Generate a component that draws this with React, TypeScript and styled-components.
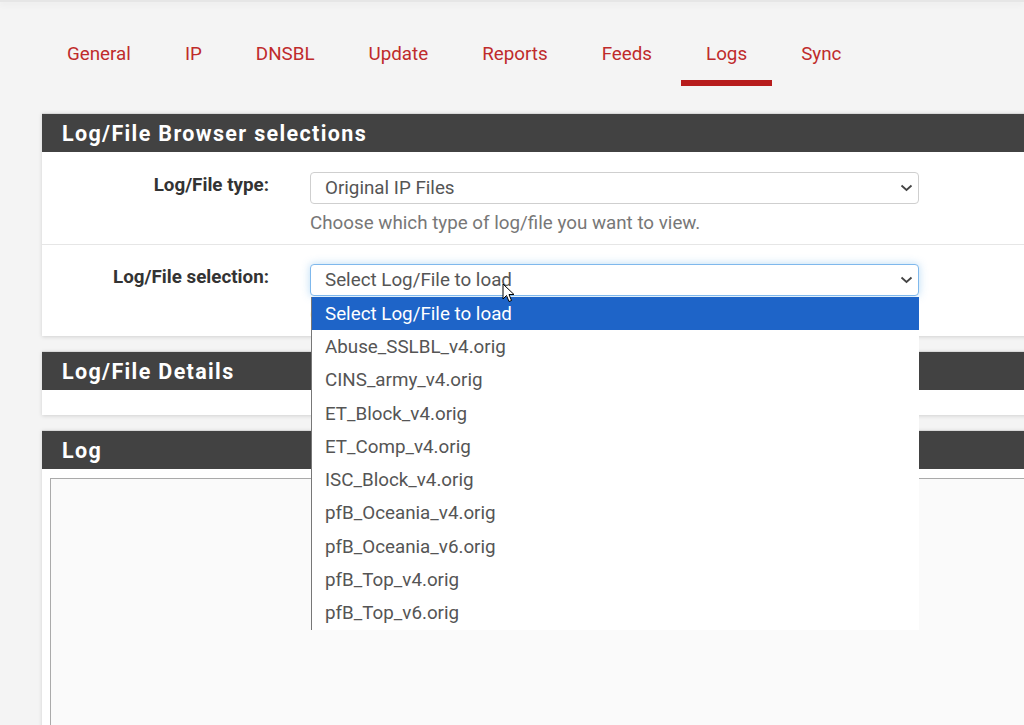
import React from 'react';
import styled, { createGlobalStyle } from 'styled-components';

const GlobalStyle = createGlobalStyle`
  html, body {
    margin: 0;
    padding: 0;
    background: #f4f4f4;
    overflow: hidden;
    font-family: Roboto, "Liberation Sans", sans-serif;
  }
`;

const TABS = ['General', 'IP', 'DNSBL', 'Update', 'Reports', 'Feeds', 'Logs', 'Sync'];

const FILES = [
  'Select Log/File to load',
  'Abuse_SSLBL_v4.orig',
  'CINS_army_v4.orig',
  'ET_Block_v4.orig',
  'ET_Comp_v4.orig',
  'ISC_Block_v4.orig',
  'pfB_Oceania_v4.orig',
  'pfB_Oceania_v6.orig',
  'pfB_Top_v4.orig',
  'pfB_Top_v6.orig',
];

const Page = styled.div`
  width: 1024px;
  height: 725px;
  overflow: hidden;
  position: relative;
`;

const TopEdge = styled.div`
  height: 2px;
  background: #e6e6e6;
  box-shadow: 0 2px 6px rgba(0, 0, 0, 0.08);
`;

const Tabs = styled.ul`
  display: flex;
  gap: 4px;
  list-style: none;
  margin: 26px 0 0 42px;
  padding: 0;
`;

const Tab = styled.li<{ $active?: boolean }>`
  padding: 0 25px;
  height: 52px;
  display: flex;
  align-items: center;
  font-size: 18.8px;
  color: #bf2b2b;
  border-bottom: 6px solid ${(p) => (p.$active ? '#b71c1c' : 'transparent')};
`;

const Content = styled.div`
  margin: 27px 0 0 42px;
  width: 1100px;
  display: flex;
  flex-direction: column;
  gap: 15px;
`;

const Panel = styled.section`
  background: #fff;
  box-shadow: 0 1px 4px rgba(0, 0, 0, 0.14);
`;

const PanelHeading = styled.h2`
  margin: 0;
  height: 38px;
  padding: 0 20px;
  display: flex;
  align-items: center;
  background: #424242;
  color: #fff;
  font-size: 21.5px;
  font-weight: 700;
  letter-spacing: 1.35px;
  border-top: 1px solid #d8d8d8;
`;

const Row = styled.div<{ $last?: boolean }>`
  display: grid;
  grid-template-columns: 253px 624px;
  padding: 20px 0 10px;
  border-bottom: ${(p) => (p.$last ? 'none' : '1px solid #e6e6e6')};

  & + & {
    padding-top: 19px;
  }
`;

const Label = styled.label`
  text-align: right;
  padding: 2px 26px 0 0;
  font-size: 18.8px;
  line-height: 22px;
  font-weight: 700;
  color: #333;
`;

const Field = styled.div`
  padding-left: 15px;
  position: relative;
`;

const SelectBox = styled.div<{ $focused?: boolean }>`
  box-sizing: border-box;
  width: 609px;
  height: 32px;
  padding: 0 5px 0 14px;
  display: flex;
  align-items: center;
  justify-content: space-between;
  background: #fff;
  border: 1px solid ${(p) => (p.$focused ? '#7fb8ec' : '#cfcfcf')};
  border-radius: 4px;
  box-shadow: ${(p) => (p.$focused ? '0 0 8px rgba(102, 175, 233, 0.45)' : 'none')};
  font-size: 18.8px;
  color: #555;
`;

const Help = styled.div`
  margin-top: 8px;
  font-size: 18.8px;
  color: #777;
  line-height: 22px;
`;

const DropList = styled.ul`
  position: absolute;
  top: 33px;
  left: 16px;
  width: 607px;
  margin: 0;
  padding: 0;
  list-style: none;
  background: #fff;
  border-left: 1px solid #777;
  z-index: 5;
`;

const Option = styled.li<{ $selected?: boolean }>`
  height: 33.3px;
  display: flex;
  align-items: center;
  padding-left: 13px;
  font-size: 18.8px;
  color: ${(p) => (p.$selected ? '#fff' : '#555')};
  background: ${(p) => (p.$selected ? '#1e64c8' : '#fff')};
`;

const DetailsBody = styled.div`
  height: 25px;
`;

const LogBody = styled.div`
  padding: 9px 0 0 8px;
`;

const LogArea = styled.div`
  height: 260px;
  background: #fafafa;
  border: 1px solid #aaa;
  border-right: none;
`;

const Cursor = styled.svg`
  position: absolute;
  left: 502px;
  top: 283px;
  z-index: 10;
`;

const Chevron = () => (
  <svg width="13" height="8" viewBox="0 0 13 8">
    <path d="M1.5 1.5 L6.5 6 L11.5 1.5" fill="none" stroke="#444" strokeWidth="1.8" />
  </svg>
);

const App: React.FC = () => (
  <Page>
    <GlobalStyle />
    <TopEdge />
    <Tabs>
      {TABS.map((t) => (
        <Tab key={t} $active={t === 'Logs'}>
          {t}
        </Tab>
      ))}
    </Tabs>
    <Content>
      <Panel>
        <PanelHeading>Log/File Browser selections</PanelHeading>
        <Row>
          <Label>Log/File type:</Label>
          <Field>
            <SelectBox>
              Original IP Files
              <Chevron />
            </SelectBox>
            <Help>Choose which type of log/file you want to view.</Help>
          </Field>
        </Row>
        <Row $last>
          <Label>Log/File selection:</Label>
          <Field>
            <SelectBox $focused>
              Select Log/File to load
              <Chevron />
            </SelectBox>
            <Help>Choose which log/file you want to view.</Help>
            <DropList>
              {FILES.map((f, i) => (
                <Option key={f} $selected={i === 0}>
                  {f}
                </Option>
              ))}
            </DropList>
          </Field>
        </Row>
      </Panel>
      <Panel>
        <PanelHeading>Log/File Details</PanelHeading>
        <DetailsBody />
      </Panel>
      <Panel>
        <PanelHeading>Log</PanelHeading>
        <LogBody>
          <LogArea />
        </LogBody>
      </Panel>
    </Content>
    <Cursor width="13" height="21" viewBox="0 0 13 21">
      <path
        d="M1 1 L1 16 L4.5 12.5 L7 18.5 L9.5 17.5 L7 11.5 L12 11.5 Z"
        fill="#fff"
        stroke="#000"
        strokeWidth="1"
        strokeLinejoin="round"
      />
    </Cursor>
  </Page>
);

export default App;
